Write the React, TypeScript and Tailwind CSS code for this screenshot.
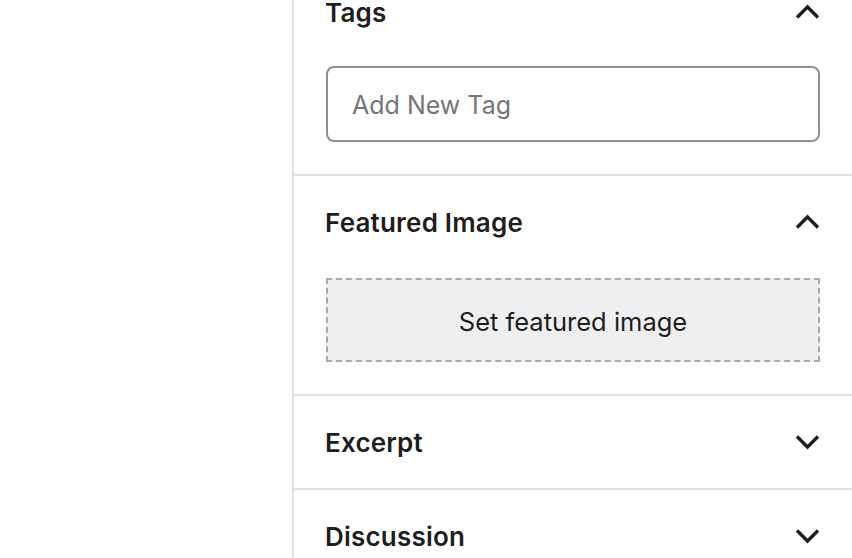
import React from "react";

const Chevron = ({ up }: { up?: boolean }) => (
  <svg width="25" height="16" viewBox="0 0 25 16" className="shrink-0" fill="none">
    <path
      d={up ? "M2 13.5L12.5 3 23 13.5" : "M2 2.5L12.5 13 23 2.5"}
      stroke="#1e1e1e"
      strokeWidth="3.4"
    />
  </svg>
);

const PanelTitle = ({ title, open }: { title: string; open?: boolean }) => (
  <div className="h-[92px] flex items-center justify-between">
    <span className="pt-[1px] -ml-[1px] text-[26px] font-semibold text-[#1e1e1e] tracking-[0.2px]">
      {title}
    </span>
    <Chevron up={open} />
  </div>
);

export default function App() {
  return (
    <div
      className="w-[852px] h-[558px] overflow-hidden bg-white flex"
      style={{ fontFamily: "Inter, 'Noto Sans', sans-serif" }}
    >
      <div className="w-[292px] shrink-0" />
      <aside className="flex-1 border-l-2 border-[#e0e0e0]">
        <div className="-mt-[34px]">
          <section className="px-8 pb-8 border-b-2 border-[#e0e0e0]">
            <PanelTitle title="Tags" open />
            <div className="mt-2 h-[76px] rounded-lg border-2 border-[#8c8f94] px-6 flex items-center">
              <span className="pt-[4px] text-[25px] text-[#757575]">Add New Tag</span>
            </div>
          </section>
          <section className="px-8 pb-8 border-b-2 border-[#e0e0e0]">
            <PanelTitle title="Featured Image" open />
            <div className="mt-[10px] h-[84px] border-2 border-dashed border-[#a7aaad] bg-[#eeeff1] flex items-center justify-center">
              <span className="pt-[4px] text-[25.5px] text-[#1e1e1e]">Set featured image</span>
            </div>
          </section>
          <section className="px-8 border-b-2 border-[#e0e0e0]">
            <PanelTitle title="Excerpt" />
          </section>
          <section className="px-8 border-b-2 border-[#e0e0e0]">
            <PanelTitle title="Discussion" />
          </section>
        </div>
      </aside>
    </div>
  );
}
